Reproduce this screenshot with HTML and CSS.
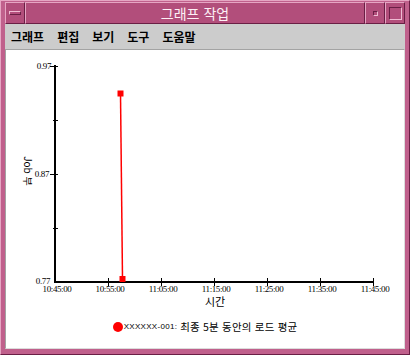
FILE: index.html
```html
<!DOCTYPE html>
<html lang="ko">
<head>
  <meta charset="UTF-8" />
  <title>그래프 작업</title>
  <link rel="stylesheet" href="styles.css">
</head>
<body>
  <div class="window">
    <div class="titlebar">
      <div class="tbtn"><span class="bar"></span></div>
      <div class="title">그래프 작업</div>
      <div class="tbtn"><span class="dot"></span></div>
      <div class="tbtn"><span class="box"></span></div>
    </div>

    <div class="menubar">
      <span>그래프</span>
      <span>편집</span>
      <span>보기</span>
      <span>도구</span>
      <span>도움말</span>
    </div>

    <div class="panel">
      <svg class="chart" width="398" height="258" viewBox="6 50 398 258">
        <!-- axes -->
        <g class="axis">
          <line x1="55" y1="65" x2="55" y2="283" />
          <line x1="54" y1="282" x2="374" y2="282" />
        </g>
        <g class="tick">
          <line x1="50" y1="66.5" x2="58" y2="66.5" />
          <line x1="53" y1="120.5" x2="58" y2="120.5" />
          <line x1="50" y1="174.5" x2="58" y2="174.5" />
          <line x1="53" y1="228.5" x2="58" y2="228.5" />
          <line x1="108.5" y1="278" x2="108.5" y2="286" />
          <line x1="161.5" y1="278" x2="161.5" y2="286" />
          <line x1="214.5" y1="278" x2="214.5" y2="286" />
          <line x1="267.5" y1="278" x2="267.5" y2="286" />
          <line x1="320.5" y1="278" x2="320.5" y2="286" />
          <line x1="373.5" y1="278" x2="373.5" y2="286" />
        </g>
        <g class="ylabels">
          <text x="51" y="69">0.97</text>
          <text x="49" y="177">0.87</text>
          <text x="50" y="284">0.77</text>
        </g>
        <g class="xlabels">
          <text x="57" y="292">10:45:00</text>
          <text x="110" y="292">10:55:00</text>
          <text x="163" y="292">11:05:00</text>
          <text x="216" y="292">11:15:00</text>
          <text x="269" y="292">11:25:00</text>
          <text x="322" y="292">11:35:00</text>
          <text x="375" y="292">11:45:00</text>
        </g>
        <text class="xtitle" x="215" y="306">시간</text>
        <text class="ytitle" transform="translate(28,171) rotate(90)">Job 부</text>

        <!-- series -->
        <line class="series" x1="120.5" y1="93.5" x2="122.5" y2="279" />
        <rect class="marker" x="117.5" y="90.5" width="6" height="6" />
        <rect class="marker" x="119.5" y="276" width="6" height="6" />
      </svg>

      <div class="legend">
        <span class="legend-dot"></span>
        <span class="legend-id">XXXXXX-001:</span>
        <span class="legend-text">최종 5분 동안의 로드 평균</span>
      </div>
    </div>
  </div>
</body>
</html>
```

FILE: styles.css
```css
body {
  margin: 0;
  font-family: "Noto Sans CJK KR", "Liberation Sans", sans-serif;
}
.window {
  box-sizing: border-box;
  width: 410px;
  height: 355px;
  display: flex;
  flex-direction: column;
  padding: 1px 4px 5px 4px;
  background: #c0608c;
  border: 1px solid;
  border-color: #e6a6c3 #6a1f45 #6a1f45 #e6a6c3;
}
.titlebar {
  display: flex;
  height: 22px;
}
.tbtn, .title {
  box-sizing: border-box;
  background: #b24e7b;
  border: 1px solid;
  border-color: #e6a6c3 #6a1f45 #6a1f45 #e6a6c3;
  display: flex;
  align-items: center;
  justify-content: center;
}
.tbtn {
  width: 20px;
}
.title {
  flex: 1;
  color: #fdf0f6;
  font-size: 14px;
  font-weight: 400;
  line-height: 1;
}
.bar {
  box-sizing: border-box;
  width: 12px;
  height: 4px;
  border: 1px solid;
  border-color: #f0bcd3 #6a1f45 #6a1f45 #f0bcd3;
}
.dot {
  box-sizing: border-box;
  width: 5px;
  height: 5px;
  border: 1px solid;
  border-color: #6a1f45 #f0bcd3 #f0bcd3 #6a1f45;
}
.box {
  box-sizing: border-box;
  width: 13px;
  height: 13px;
  border: 1px solid;
  border-color: #6a1f45 #f0bcd3 #f0bcd3 #6a1f45;
}
.menubar {
  height: 25px;
  background: #cccccc;
  display: flex;
  align-items: center;
  gap: 13px;
  padding-left: 6px;
  font-size: 12px;
  font-weight: bold;
  color: #000;
}
.panel {
  flex: 1;
  background: #fff;
  border: 1px solid #a3a3a3;
  border-right-color: #dcdcdc;
  border-bottom-color: #dcdcdc;
}
.chart {
  display: block;
}
.axis line {
  stroke: #000;
  stroke-width: 2;
}
.tick line {
  stroke: #000;
  stroke-width: 1;
}
.ylabels text, .xlabels text {
  font-family: "Liberation Serif", serif;
  font-size: 9px;
  letter-spacing: -0.4px;
  fill: #000;
}
.ylabels text {
  text-anchor: end;
}
.xlabels text {
  text-anchor: middle;
}
.xtitle {
  font-size: 11px;
  text-anchor: middle;
}
.ytitle {
  font-size: 10px;
  fill: #000;
  text-anchor: middle;
  dominant-baseline: central;
}
.series {
  stroke: #ff0000;
  stroke-width: 1.5;
}
.marker {
  fill: #ff0000;
}
.legend {
  display: flex;
  justify-content: center;
  align-items: center;
  margin-top: 12px;
  height: 13px;
}
.legend-dot {
  width: 10px;
  height: 10px;
  border-radius: 50%;
  background: #ff0000;
  margin-right: 1px;
}
.legend-id {
  font-family: "Liberation Sans", sans-serif;
  font-size: 8px;
  letter-spacing: 0.3px;
  margin-right: 3px;
}
.legend-text {
  font-size: 10.5px;
  letter-spacing: 0.2px;
}
```
